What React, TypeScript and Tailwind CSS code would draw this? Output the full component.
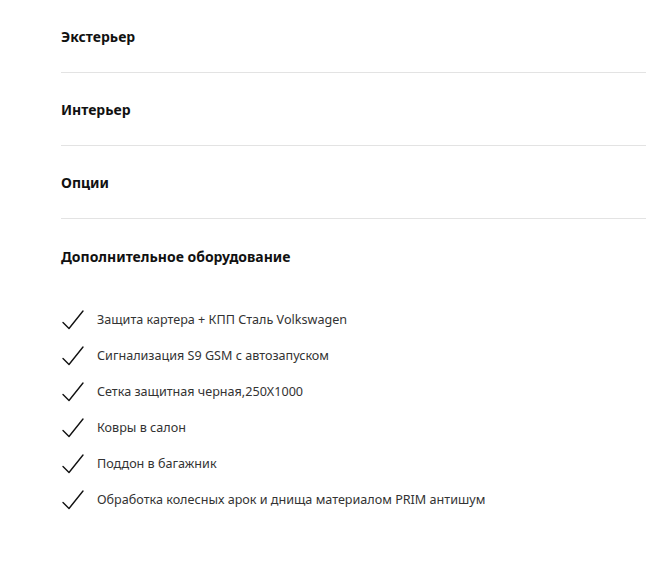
import React from "react";

const sections = ["Экстерьер", "Интерьер", "Опции"];
const items = [
  "Защита картера + КПП Сталь Volkswagen",
  "Сигнализация S9 GSM с автозапуском",
  "Сетка защитная черная,250X1000",
  "Ковры в салон",
  "Поддон в багажник",
  "Обработка колесных арок и днища материалом PRIM антишум",
];

function Check() {
  return (
    <svg width="22" height="20" viewBox="0 0 22 20" fill="none" className="shrink-0">
      <path d="M1 12.5 L7 18.5 L21 1" stroke="#111" strokeWidth="1.4" strokeLinecap="round" strokeLinejoin="round" />
    </svg>
  );
}

export default function App() {
  return (
    <div className="w-[646px] h-[570px] bg-white pl-[61px]" style={{ fontFamily: '"Noto Sans", "Open Sans", sans-serif' }}>
      {sections.map((s) => (
        <div key={s} className="h-[73px] border-b border-[#e3e3e3] flex items-center pt-[1px]">
          <span className="text-[14px] font-bold text-[#111]">{s}</span>
        </div>
      ))}
      <div className="h-[73px] flex items-center pt-[1px]">
        <span className="text-[14px] font-bold text-[#111]">Дополнительное оборудование</span>
      </div>
      <div className="pt-[10px] flex flex-col">
        {items.map((t) => (
          <div key={t} className="h-[36px] flex items-center">
            <div className="w-[36px] flex items-center pl-[1px]">
              <Check />
            </div>
            <span className="text-[12.6px] text-[#333]">{t}</span>
          </div>
        ))}
      </div>
    </div>
  );
}
